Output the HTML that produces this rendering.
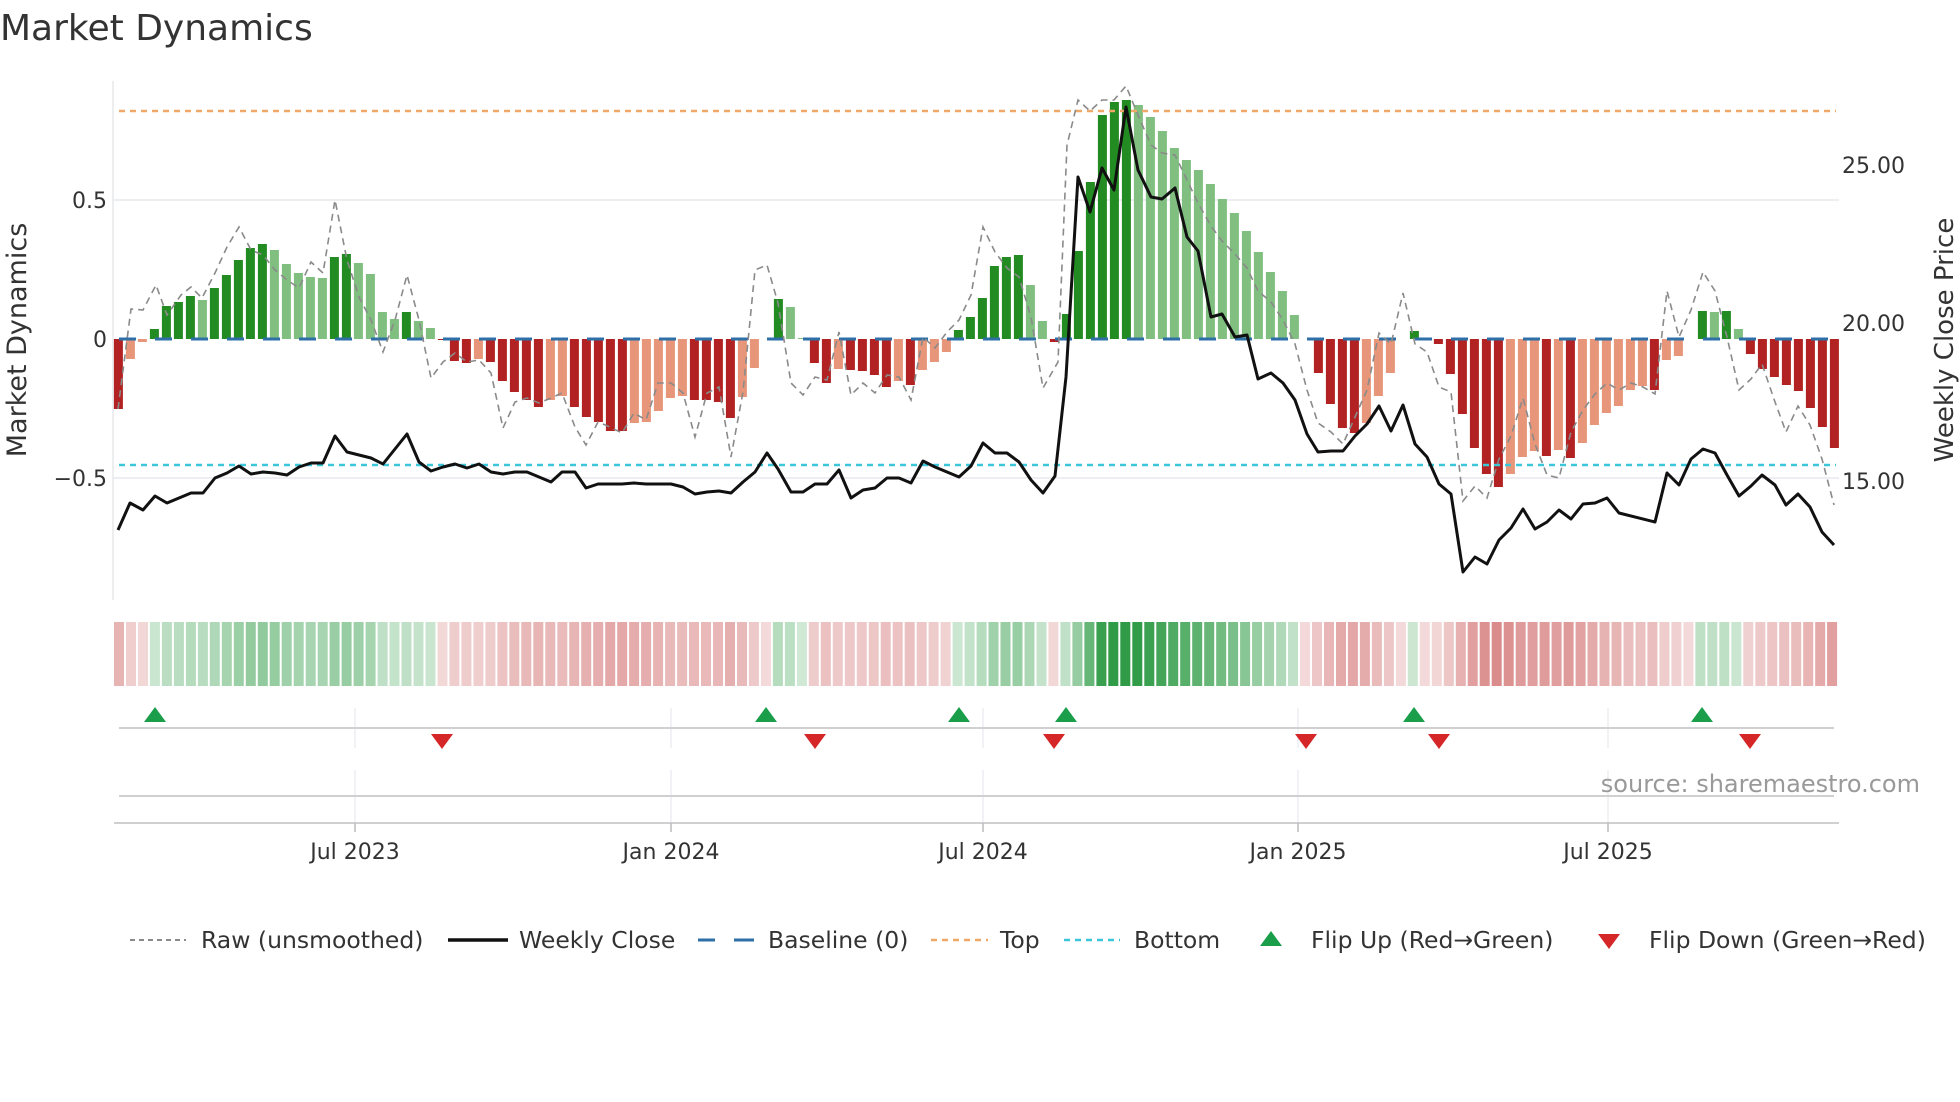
<!DOCTYPE html>
<html><head><meta charset="utf-8"><style>
html,body{margin:0;padding:0;background:#fff;width:1960px;height:1102px;overflow:hidden}
svg{display:block;font-family:"DejaVu Sans","Liberation Sans",sans-serif}
</style></head><body>
<svg id="c" width="1960" height="1102" viewBox="0 0 1960 1102" xmlns="http://www.w3.org/2000/svg">
<rect width="1960" height="1102" fill="#fff"/>
<text x="0" y="40" font-size="36" fill="#333">Market Dynamics</text>
<line x1="113" y1="200" x2="1839" y2="200" stroke="#eceef2" stroke-width="2"/>
<line x1="113" y1="478" x2="1839" y2="478" stroke="#eceef2" stroke-width="2"/>
<line x1="113" y1="81" x2="113" y2="600" stroke="#e6e8ec" stroke-width="1.5"/>
<g font-size="22" fill="#333" text-anchor="end">
<text x="107" y="208">0.5</text>
<text x="107" y="347">0</text>
<text x="107" y="486">−0.5</text>
</g>
<g font-size="22" fill="#333">
<text x="1842" y="173">25.00</text>
<text x="1842" y="331">20.00</text>
<text x="1842" y="489">15.00</text>
</g>
<text transform="translate(26,340) rotate(-90)" font-size="27" fill="#333" text-anchor="middle">Market Dynamics</text>
<text transform="translate(1953,340) rotate(-90)" font-size="26" fill="#333" text-anchor="middle">Weekly Close Price</text>
<g id="bars"></g>
<g id="strip"></g>
<line x1="119" y1="339" x2="1836" y2="339" stroke="#2e6fa7" stroke-width="3" stroke-dasharray="17 19"/>
<line x1="119" y1="111" x2="1836" y2="111" stroke="#f0a868" stroke-width="2.5" stroke-dasharray="6 5"/>
<line x1="119" y1="465" x2="1836" y2="465" stroke="#3cc6da" stroke-width="2.5" stroke-dasharray="6 5"/>
<polyline id="raw" fill="none" stroke="#8a8a8a" stroke-width="1.6" stroke-dasharray="7 5"/>
<polyline id="price" fill="none" stroke="#111" stroke-width="3" stroke-linejoin="round"/>
<g stroke="#eceef2" stroke-width="1.5">
<line x1="355" y1="708" x2="355" y2="748"/><line x1="671" y1="708" x2="671" y2="748"/><line x1="983" y1="708" x2="983" y2="748"/><line x1="1298" y1="708" x2="1298" y2="748"/><line x1="1608" y1="708" x2="1608" y2="748"/>
<line x1="355" y1="770" x2="355" y2="822"/><line x1="671" y1="770" x2="671" y2="822"/><line x1="983" y1="770" x2="983" y2="822"/><line x1="1298" y1="770" x2="1298" y2="822"/><line x1="1608" y1="770" x2="1608" y2="822"/>
</g>
<line x1="119" y1="728" x2="1834" y2="728" stroke="#d0d0d0" stroke-width="2"/>
<line x1="119" y1="796" x2="1834" y2="796" stroke="#d0d0d0" stroke-width="2"/>
<line x1="114" y1="823" x2="1839" y2="823" stroke="#d0d0d0" stroke-width="2"/>
<g stroke="#bbb" stroke-width="1.5">
<line x1="355" y1="823" x2="355" y2="832"/><line x1="671" y1="823" x2="671" y2="832"/><line x1="983" y1="823" x2="983" y2="832"/><line x1="1298" y1="823" x2="1298" y2="832"/><line x1="1608" y1="823" x2="1608" y2="832"/>
</g>
<g id="marks"></g>
<g font-size="22" fill="#333" text-anchor="middle">
<text x="355" y="859">Jul 2023</text>
<text x="671" y="859">Jan 2024</text>
<text x="983" y="859">Jul 2024</text>
<text x="1298" y="859">Jan 2025</text>
<text x="1608" y="859">Jul 2025</text>
</g>
<text x="1920" y="792" font-size="24" fill="#999" text-anchor="end">source: sharemaestro.com</text>
<g font-size="23.5" fill="#333">
<line x1="130" y1="940" x2="186" y2="940" stroke="#8a8a8a" stroke-width="2" stroke-dasharray="5 4"/>
<text x="201" y="948">Raw (unsmoothed)</text>
<line x1="448" y1="940" x2="508" y2="940" stroke="#111" stroke-width="3.5"/>
<text x="519" y="948">Weekly Close</text>
<line x1="698" y1="940" x2="754" y2="940" stroke="#2e6fa7" stroke-width="3" stroke-dasharray="17 19"/>
<line x1="735" y1="940" x2="754" y2="940" stroke="#2e6fa7" stroke-width="3"/>
<text x="768" y="948">Baseline (0)</text>
<line x1="931" y1="940" x2="988" y2="940" stroke="#f0a868" stroke-width="2.5" stroke-dasharray="6 5"/>
<text x="1000" y="948">Top</text>
<line x1="1064" y1="940" x2="1120" y2="940" stroke="#3cc6da" stroke-width="2.5" stroke-dasharray="6 5"/>
<text x="1134" y="948">Bottom</text>
<polygon points="1260,946 1282,946 1271,931" fill="#1a9e4a"/>
<text x="1311" y="948">Flip Up (Red→Green)</text>
<polygon points="1598,934 1620,934 1609,949" fill="#d62728"/>
<text x="1649" y="948">Flip Down (Green→Red)</text>
</g>
</svg>
<script>
(function(){
var NS="http://www.w3.org/2000/svg";
var v=[-70,-20,-3,10,33,37,43,39,51,64,79,91,95,89,75,66,62,61,82,85,76,65,27,20,27,18,11,-1,-22,-24,-20,-23,-42,-53,-61,-68,-61,-57,-68,-78,-83,-92,-92,-84,-83,-72,-59,-57,-61,
-61,-63,-79,-58,-29,0,40,32,1,-24,-44,-30,-31,-32,-36,-48,-42,-46,-31,-23,-13,9,22,41,73,
82,84,54,18,-3,25,88,157,224,237,239,234,222,208,191,179,169,155,140,126,108,87,67,48,24,
0,-34,-65,-89,-94,-84,-57,-34,0,8,0,-5,-35,-75,-109,-135,-148,-135,-118,-112,-117,-111,-119,-104,-86,-74,-67,-51,-47,-51,-21,-17,0,28,27,28,10,-15,-30,-38,-46,-52,-69,-88,-109];
function el(t,a,p){var e=document.createElementNS(NS,t);for(var k in a)e.setAttribute(k,a[k]);p.appendChild(e);return e;}
var bars=document.getElementById('bars'),strip=document.getElementById('strip');
function mix(c,t){var r=Math.round(255+(c[0]-255)*t),g=Math.round(255+(c[1]-255)*t),b=Math.round(255+(c[2]-255)*t);return 'rgb('+r+','+g+','+b+')';}
for(var i=0;i<v.length;i++){
 var x=118.4+12*i, h=v[i], p=i>0?v[i-1]:h, col;
 if(h>=0) col=(h>=p)?'#228b22':'#80bf80'; else col=(h<=p)?'#b22222':'#e8967a';
 if(h!==0) el('rect',{x:(x-4.5).toFixed(1),y:h>0?339-h:339,width:9,height:Math.abs(h),fill:col},bars);
 var sc = h>0? mix([46,155,69],0.22+0.78*Math.min(h/240,1)) : mix([200,80,80],0.22+0.45*Math.min(-h/150,1));
 el('rect',{x:(114+11.98*i).toFixed(1),y:622,width:10,height:64,fill:sc},strip);
}
var price=[[118,530],[130,503],[143,510],[155,496],[167,503],[179,498],[191,493],[203,493],[215,478],[227,473],[239,466],[251,474],[263,472],[275,473],[287,475],[299,467],[311,463],[323,463],[335,436],[347,452],[359,455],[371,458],[383,464],[395,449],[407,434],[419,462],[431,471],[443,467],[455,464],[467,468],[479,464],[491,472],[503,474],[515,472],[527,472],[539,477],[551,482],[562,472],[575,472],[586,488],[598,484],[610,484],[622,484],[634,483],[646,484],[658,484],[671,484],[683,487],[695,494],[707,492],[719,491],[731,493],[743,482],[755,472],[767,453],[778,469],[791,492],[803,492],[815,484],[827,484],[839,470],[851,498],[863,490],[875,488],[887,478],[899,478],[911,483],[923,461],[935,467],[947,472],[959,477],[971,466],[983,443],[995,453],[1007,453],[1019,462],[1031,480],[1043,493],[1055,476],[1066,377],[1078,177],[1090,212],[1102,168],[1114,190],[1126,107],[1138,170],[1151,197],[1162,199],[1175,188],[1187,237],[1198,251],[1211,317],[1222,314],[1235,337],[1247,335],[1258,379],[1271,373],[1283,383],[1295,400],[1307,434],[1318,452],[1331,451],[1343,451],[1355,436],[1367,424],[1379,406],[1391,431],[1403,405],[1415,444],[1427,457],[1439,484],[1451,494],[1463,572],[1475,557],[1487,564],[1499,540],[1511,528],[1523,509],[1535,529],[1547,522],[1559,510],[1571,519],[1583,504],[1595,503],[1607,498],[1619,513],[1655,522],[1667,473],[1679,485],[1691,459],[1703,449],[1715,453],[1727,475],[1739,496],[1751,486],[1762,475],[1775,485],[1786,505],[1798,494],[1810,507],[1822,532],[1834,545]];
var raw=[[118,409],[131,309],[143,310],[156,285],[167,315],[181,295],[191,287],[202,298],[215,273],[227,247],[239,227],[251,250],[263,255],[275,270],[287,280],[299,288],[311,262],[323,273],[335,200],[347,260],[359,297],[371,320],[383,352],[395,320],[407,275],[419,320],[431,378],[443,362],[455,353],[467,362],[479,360],[491,373],[503,428],[515,402],[527,398],[539,403],[551,398],[562,393],[575,427],[586,445],[598,422],[610,427],[622,433],[634,413],[646,420],[658,383],[671,383],[683,393],[695,437],[707,393],[719,387],[731,457],[743,392],[755,270],[767,265],[778,303],[791,383],[803,395],[815,377],[827,380],[839,332],[851,395],[863,383],[875,393],[887,375],[899,377],[911,400],[923,337],[935,348],[947,332],[959,320],[971,295],[983,227],[995,252],[1007,268],[1019,277],[1031,317],[1043,388],[1058,362],[1067,145],[1078,100],[1090,111],[1102,100],[1114,100],[1126,86],[1138,115],[1151,145],[1162,153],[1175,155],[1187,180],[1198,203],[1211,226],[1222,241],[1235,254],[1247,268],[1258,291],[1271,302],[1283,320],[1295,344],[1307,390],[1318,423],[1331,432],[1343,444],[1355,417],[1367,390],[1379,333],[1391,344],[1403,293],[1415,344],[1427,352],[1439,387],[1451,392],[1463,501],[1475,486],[1487,498],[1499,459],[1511,436],[1523,398],[1535,444],[1547,475],[1559,478],[1571,432],[1583,410],[1595,394],[1607,383],[1619,390],[1631,383],[1643,387],[1655,394],[1667,291],[1679,337],[1691,310],[1703,272],[1715,291],[1727,337],[1739,390],[1751,379],[1762,364],[1775,402],[1786,432],[1798,406],[1810,425],[1822,459],[1834,505]];
document.getElementById('price').setAttribute('points',price.map(function(p){return p.join(',')}).join(' '));
document.getElementById('raw').setAttribute('points',raw.map(function(p){return p.join(',')}).join(' '));
var m=document.getElementById('marks');
[155,766,959,1066,1414,1702].forEach(function(x){el('polygon',{points:(x-11)+',722 '+(x+11)+',722 '+x+',707',fill:'#1a9e4a'},m);});
[442,815,1054,1306,1439,1750].forEach(function(x){el('polygon',{points:(x-11)+',734 '+(x+11)+',734 '+x+',749',fill:'#d62728'},m);});
})();
</script>
</body></html>
